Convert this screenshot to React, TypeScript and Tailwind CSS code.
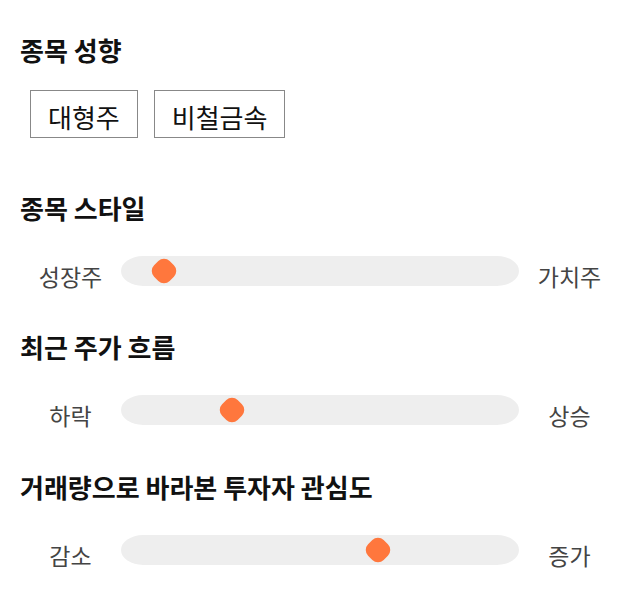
const font = {
  fontFamily: '"Noto Sans CJK KR", "Noto Sans", sans-serif',
};

type SliderProps = { left: string; right: string; pos: number };

function Slider({ left, right, pos }: SliderProps) {
  return (
    <div className="flex items-center h-[30px]">
      <div className="w-[101px] shrink-0 pt-[10px] text-center text-[23px] text-[#444]">{left}</div>
      <div className="relative flex-1 h-[30px] bg-[#eeeeee] rounded-[22px/15px]">
        {/* thumb */}
        <div
          className="absolute top-1/2 w-[22px] h-[22px] -translate-x-1/2 -translate-y-1/2 rotate-45 rounded-[8px] bg-[#ff773d]"
          style={{ left: `${pos}%` }}
        />
      </div>
      <div className="w-[101px] shrink-0 pt-[10px] text-center text-[23px] text-[#444]">{right}</div>
    </div>
  );
}

function Heading({ children }: { children: React.ReactNode }) {
  return <h2 className="text-[26px] leading-[32px] font-bold text-[#111]">{children}</h2>;
}

export default function App() {
  return (
    <div className="w-[640px] h-[606px] bg-white px-5 pt-[34px]" style={font}>
      <Heading>종목 성향</Heading>
      <div className="mt-[24px] ml-[10px] flex gap-4">
        <div className="h-[48px] px-[17px] pt-[4px] flex items-center border border-[#888] text-[26px] text-[#111]">대형주</div>
        <div className="h-[48px] px-[17px] pt-[4px] flex items-center border border-[#888] text-[26px] text-[#111]">비철금속</div>
      </div>

      <div className="mt-[54px]">
        <Heading>종목 스타일</Heading>
      </div>
      <div className="mt-[32px]">
        <Slider left="성장주" right="가치주" pos={10.8} />
      </div>

      <div className="mt-[45px]">
        <Heading>최근 주가 흐름</Heading>
      </div>
      <div className="mt-[32px]">
        <Slider left="하락" right="상승" pos={27.9} />
      </div>

      <div className="mt-[46px]">
        <Heading>거래량으로 바라본 투자자 관심도</Heading>
      </div>
      <div className="mt-[32px]">
        <Slider left="감소" right="증가" pos={64.6} />
      </div>
    </div>
  );
}
